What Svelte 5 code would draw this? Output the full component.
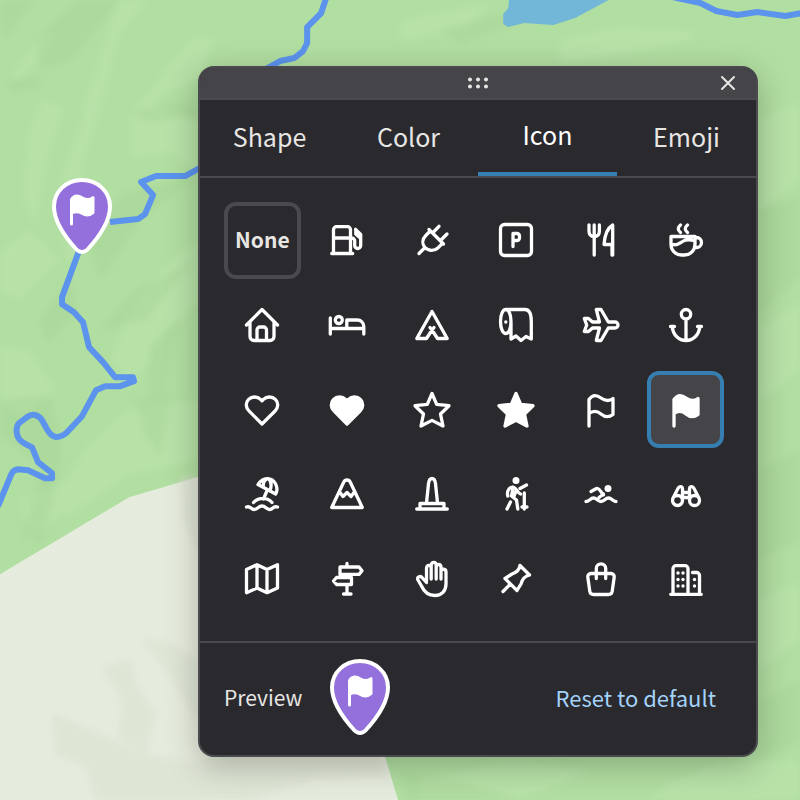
<script lang="ts">
  type Icon = { name: string; d: string; fill?: string; dots?: number[][] };

  const FLAG =
    "M8 36V9.5c4-5.5 8-4.500 12-1.500s8 3.500 12 .5v16c-4 3-8.500 2.500-12-.5s-8-3.500-12-.5";
  const HEART =
    "M20 34L7.2 21.2c-3.800-3.700-3.800-8.600-.6-11.800s8.700-3.200 12 0l1.400 1.400 1.400-1.400c3.300-3.200 8.800-3.200 12 0s3.200 8.100-.6 11.800z";
  const STAR =
    "M20 3.5L24.7 14.3 37 15.7 28.5 24 31 36 20 30.4 9 36 11.5 24 3 15.7 15.3 14.3z";

  const icons: Icon[] = [
    {
      name: "Gas station",
      d: "M6.5 33.500V9.700a3 3 0 0 1 3-3h11a3 3 0 0 1 3 3v23.800M4.700 33.500h21M6.500 18h17M23.500 18h1.200a3 3 0 0 1 3 3v4.500a3 3 0 0 0 6 0V14.500L28.500 9.300M28.800 10v4l4.500 4",
    },
    {
      name: "Charging",
      d: "M7 33.500l5.500-5.500M17 9.500l14.500 14.500M18.300 11l-4.300 4.200c-4 4-4 9-1 12.500 3.500 3.500 9.500 3.500 13.200 0l4.300-4.400M21.500 12l5.500-5.700M29.500 19.500l5.500-5.500",
    },
    {
      name: "Parking",
      d: "M8.500 4.500h23a4 4 0 0 1 4 4v23a4 4 0 0 1-4 4h-23a4 4 0 0 1-4-4v-23a4 4 0 0 1 4-4zM17 26.500V13.500h4a2.500 2.500 0 0 1 2.500 2.500v2a2.500 2.500 0 0 1-2.500 2.500h-4",
    },
    {
      name: "Restaurant",
      d: "M8 5v6c0 3.500 2 5.500 5.200 5.500s5.200-2 5.200-5.500V5M13.200 5v30M31.700 35V5c-5 3-8 9-8.700 19.500h8.700M31 26v9",
    },
    {
      name: "Cafe",
      d: "M5 16.500h24v7.500c0 6.500-4.500 11-10.500 11h-3c-6 0-10.500-4.500-10.500-11zM29 17.500h1.500a5 5 0 0 1 0 10H28.500M14.500 5c-3 2.500-3 5 0 7.500M21.500 5c-3 2.500-3 5 0 7.500M5 24c6 2 8.500-.5 11.500-2.500s7-2.500 12.500-.5",
    },
    {
      name: "House",
      d: "M4.500 20L20 4.500 35.500 20M8 17.500v14a4 4 0 0 0 4 4h16a4 4 0 0 0 4-4v-14M15 35V25a3 3 0 0 1 3-3h3.500a3 3 0 0 1 3 3v10",
    },
    {
      name: "Lodging",
      d: "M3.300 13v16M3.300 23.500h33.500M36.800 29v-7.500a6.500 6.500 0 0 0-6.500-6.500H19.800v8.500M15.300 15a3.500 3.500 0 1 1-7 0 3.500 3.500 0 0 1 7 0z",
    },
    {
      name: "Campground",
      d: "M20 6.500L4.800 33.500h9.700L20 25l5.500 8.500h9.700zM18 22.500l2 2.500 2-2.500",
    },
    {
      name: "Restroom",
      d: "M15 16.500c0 6.800-2.200 12-5.200 12s-5.300-5.200-5.300-12 2.300-12 5.300-12 5.200 5.200 5.200 12zM9.500 4.500h19.500c4.500 0 6.300 5 6.300 12V34L30 31.500 25 35.500 20 31 15 34V17",
      dots: [[9.800, 17]],
    },
    {
      name: "Airport",
      d: "M34 17h-6.700L20 4.500h-4.700L18.500 17h-7L7.500 13.500H3.300L5.700 20 3.300 26.500h4.200l4-3.500h7l-3.200 12.500H20L27.300 23H34a3 3 0 0 0 0-6z",
    },
    {
      name: "Harbor",
      d: "M24.700 9.200a4.700 4.700 0 1 1-9.400 0 4.700 4.700 0 0 1 9.400 0zM20 14v21M4.500 21.500h4M31.500 21.500h4M6.300 22c.7 8 6.700 13.500 13.700 13.500S33 30 33.700 22",
    },
    { name: "Heart", d: HEART },
    { name: "Heart, filled", d: HEART, fill: "currentColor" },
    { name: "Star", d: STAR },
    { name: "Star, filled", d: STAR, fill: "currentColor" },
    { name: "Flag", d: FLAG },
    { name: "Flag, filled", d: FLAG, fill: "currentColor" },
    {
      name: "Beach",
      d: "M16 10.500c5-8 14-7.500 17.500-.8 2 3.800 1.800 7.300.2 10.300zM25 4.700c-3 1.500-4 5-3.700 8.500M26.500 4.700c3 3 3 7.500 1.700 11.300M25.500 15.500l-4 9.500M11.500 28.500c5-5.500 14-5.500 18.500 0M4.500 33c4.500-1.500 4 2.500 7.700 2.500s4-3.500 7.800-3.500 4 3.500 7.700 3.500 3-4 7.800-2.500",
    },
    {
      name: "Mountain",
      d: "M16.800 8c1.200-2.700 5.200-2.700 6.400 0L35.300 33.500H4.700zM12.700 18l3.300 4.500 4-4 4 4 3.300-4.500",
    },
    {
      name: "Monument",
      d: "M4.700 35h30.600M8 34.500v-5h24v5M14.500 29l2-19.500c.5-3 2-5 3.500-5s3 2 3.500 5l2 19.500",
    },
    {
      name: "Hiking",
      d: "M16.500 13c-5 1-5.500 6-4.700 9M17 13.500c3-.5 4.500 5.500 7.500 6.500M24 14.500l6.500-3.500M17 14l-1.500 8 5 4 1.300 9M20.500 16l-2.500 6M14.500 28l-3.500 7M28.300 19v16M26 33h5",
      dots: [[20, 6.500, 3.500]],
    },
    {
      name: "Swimming",
      d: "M10 17.500l5.500-3c1.500-.8 3.500 1.500 7 6.500M22.500 20l-4.500 3.500M5 27.500c4 0 4-3.500 7.500-3.500s4 3.500 7.500 3.500 4-3.500 7.500-3.500 4 3.500 7.500 3.500",
      dots: [[27, 14.500, 3.500]],
    },
    {
      name: "Binoculars",
      d: "M16.500 26.500a5 5 0 1 1-10 0 5 5 0 0 1 10 0zM33.500 26.500a5 5 0 1 1-10 0 5 5 0 0 1 10 0zM6.800 24.500L12 14.500c1-2.500 4-2.500 4.500 0v12M33.200 24.500L28 14.500c-1-2.500-4-2.500-4.500 0v12M16.500 18.500h7M16.500 23.500h7",
    },
    {
      name: "Map",
      d: "M4.500 10.500L15 5.700 25 10.500 35.500 5.700V29L25 33.700 15 29 4.500 33.700zM15 5.700V29M25 10.500v23",
    },
    {
      name: "Signpost",
      d: "M20 4.500V7M20 16v2.500M20 26v8.500M16.500 35h7.500M13 8h19l3 3.700-3 3.700H13zM24.500 18.500H9.500L6.500 22 9.500 25.500h15z",
    },
    {
      name: "Hand",
      d: "M14.500 22V9.500c0-4.200 4.700-4 4.700 0V20M19.200 9V6.500c0-4.200 5-4.200 5 0V20M24.200 8.500c0-4 4.800-4 4.800 0V20M29 12c.5-2.500 5-2.500 5 1v12c0 7-4.500 11.500-11 11.500-8 0-11.500-5-13.500-9.500l-3.500-6c-1.500-3 2-4.500 4-2.500l4.500 5",
    },
    {
      name: "Pin",
      d: "M7 32.500l7-7M24 6.500l9.500 9.500M24 6.500c-.5 4.500-4 7-8 8.500L9 19.500 21 31.500l4-6.500c1-4 3.500-8 8.500-9",
    },
    {
      name: "Shopping",
      d: "M10 14.500h20a3.200 3.200 0 0 1 3.200 3.700l-2 14a4 4 0 0 1-4 3.300H12.800a4 4 0 0 1-4-3.300l-2-14a3.200 3.200 0 0 1 3.200-3.700zM15.300 19.500V9.500a4.700 4.700 0 0 1 9.400 0v10",
    },
    {
      name: "Buildings",
      d: "M4.700 35.300h30.600M7 35V9.700a3 3 0 0 1 3-3h9a3 3 0 0 1 3 3V35M26.500 13.500h4a3 3 0 0 1 3 3V35",
      dots: [
        [12, 14],
        [17, 14],
        [12, 20.500],
        [17, 20.500],
        [12, 27],
        [17, 27],
        [28.500, 20.500],
        [28.500, 27],
      ],
    },
  ];

  const tabs = ["Shape", "Color", "Icon", "Emoji"];

  let activeTab = $state("Icon");
  let selected = $state("Flag, filled");
</script>

{#snippet marker()}
  <svg class="marker" viewBox="0 0 60 76" aria-hidden="true">
    <path
      class="marker-body"
      d="M30 2C14.5 2 2 13.500 2 28.500 2 43 13.500 59.500 24.500 71.500c3 3.300 8 3.300 11 0C46.500 59.500 58 43 58 28.500 58 13.500 45.500 2 30 2z"
    />
    <path
      class="marker-flag"
      d="M19.500 46V21.500c3-4.500 7-4 11-1.500 3.500 2 7 2.300 10.500-.3V34.500c-3.500 3-7.500 3-11 .8s-7-2.300-10.500 0"
    />
  </svg>
{/snippet}

<main>
  <svg class="map" viewBox="0 0 800 800" preserveAspectRatio="xMinYMin slice" aria-hidden="true">
    <defs>
      <filter id="soften"><feGaussianBlur stdDeviation="3" /></filter>
    </defs>
    <g class="light" filter="url(#soften)">
      <path d="M10 78L40 34 58 36 42 58 18 82zM100 60L118 0h30l-30 38-14 60-18 40-4-30zM165 70l30-35 20 5-18 40-60 28z" />
      <path d="M28 130l14-30 22 6-18 60-10 60-14-30zM60 180l30-80 12 4-20 60 4 80-20 20zM130 110l32-30-6 28 44 14v50l-30-20-40 6zM0 250l30-20 30 30-40 40-20-8z" />
      <path d="M130 310l35-45 35-25v60l-40 40-28 50-22-30zM0 345l30 5 26 40-30 26-26-12zM84 450l40-40 76-10v60l-70 15-60 40-20-10zM20 500l50-20 20 10-60 50z" />
      <path d="M400 20l90-18-20 24-70 16zM560 40l60-14 80 6-20 12-120 20zM760 120l40-20v80l-40 30zM760 330l40-30v70l-40 30zM758 600l42-20v60l-42 30zM420 780l90-20 80 10-70 30H420zM640 800l80-40 80 0v40z" />
    </g>
    <g class="dark" filter="url(#soften)">
      <path d="M0 0h34L4 40zM35 40l44-40h40L96 30 70 60 40 70zM8 82l28-6 6 10-30 6zM128 112l60-10 12 12-50 8zM90 245l30-50 80-20-60 45-40 60zM40 320l30-40 8 30-30 34zM135 290l60-30-50 60-45 10z" />
      <path d="M150 345l30-30-8 40-12 60-10-10zM135 400l36-10-10 66-16-20zM0 400l50-5 12 60-20 90-20-10 20-70-42-30zM440 30l80-20 10 8-70 26zM758 210l42-14v80l-42 40zM758 470l42-20v90l-42 20zM760 700l40-20v60l-40 20zM400 770l60 10 60 20H405z" />
    </g>
    <path class="sand" d="M0 574L129 497 200 476 350 540 385 757 398 800H0z" />
    <g class="sand-dark" filter="url(#soften)">
      <path d="M142 638l28 4 28 18v60l-16-22-18-30zM102 668l28-10 6 26 20 30-10 40-28-16 4-36zM52 712l18 8 66 30 62 14 30 30-30 6H95l-8-32-32-14zM180 476h20v80l-18-40z" />
      <path d="M200 757h180l8 20-70 2-70 21h-40z" />
    </g>
    <path class="water" d="M509-2L508 8 503 14V24L508 27 524 23 553 25 575 18 612-2z" />
    <path class="road" d="M326-2L321 13 307 27V43L303 51 294 58 280 61 262 71" />
    <path class="road" d="M205 165L185 176H156L141 182 153 195 145 214 138 219 110 222" />
    <path
      class="road"
      d="M80 248L62 297V304L74 312 83 322 89 347 103 362 115 377H133L134 381 120 386H105L96 390 82 416 66 433C58 439 52 438 47 429L42 420C38 414 32 413 27 417L19 423C16 426 16 433 18 437 20 442 27 445 32 447L38 462 52 473V478H45L28 470 18 469C11 470 11 476 8 482L-2 506"
    />
    <path class="road" d="M672-3L700 3 716 11 737 15 757 12 785 16 802 13" />
  </svg>

  <div class="map-pin">{@render marker()}</div>

  <section class="panel" aria-label="Marker style">
    <header>
      <svg class="grip" viewBox="0 0 22 12" aria-hidden="true">
        {#each [3, 11, 19] as x}
          <circle cx={x} cy="2.5" r="2" />
          <circle cx={x} cy="9.5" r="2" />
        {/each}
      </svg>
      <button class="close" aria-label="Close">
        <svg viewBox="0 0 16 16" aria-hidden="true"><path d="M2 2l12 12M14 2L2 14" /></svg>
      </button>
    </header>

    <div class="tabs" role="tablist">
      {#each tabs as tab}
        <button
          role="tab"
          class:active={activeTab === tab}
          aria-selected={activeTab === tab}
          onclick={() => (activeTab = tab)}>{tab}</button
        >
      {/each}
    </div>

    <div class="icons">
      <button class="none" onclick={() => (selected = "")}>None</button>
      {#each icons as icon}
        <button
          class:selected={selected === icon.name}
          aria-label={icon.name}
          aria-pressed={selected === icon.name}
          onclick={() => (selected = icon.name)}
        >
          <svg viewBox="0 0 40 40" fill={icon.fill ?? "none"} aria-hidden="true">
            <path d={icon.d} />
            {#each icon.dots ?? [] as [cx, cy, r]}
              <circle {cx} {cy} r={r ?? 1.7} />
            {/each}
          </svg>
        </button>
      {/each}
    </div>

    <footer>
      <span>Preview</span>
      {@render marker()}
      <button class="reset" onclick={() => (selected = "Flag, filled")}>Reset to default</button>
    </footer>
  </section>
</main>

<style>
  main {
    position: relative;
    min-height: 100vh;
    box-sizing: border-box;
    padding: 66px 42px 43px 198px;
    background: #b1dea1;
    overflow: hidden;
    font-family: "Noto Sans CJK SC", "Open Sans", sans-serif;
    color: #e8e6e3;
  }
  .map {
    position: absolute;
    inset: 0;
    width: 100%;
    height: 100%;
  }
  .light {
    fill: #bde5ae;
    opacity: 0.5;
  }
  .dark {
    fill: #a4d193;
    opacity: 0.35;
  }
  .sand {
    fill: #e6ecdd;
  }
  .sand-dark {
    fill: #d8dfcd;
    opacity: 0.5;
  }
  .water {
    fill: #72b7d8;
  }
  .road {
    fill: none;
    stroke: #5c93ec;
    stroke-width: 6;
    stroke-linejoin: round;
  }
  .map-pin {
    position: absolute;
    left: 52px;
    top: 178px;
  }
  .marker {
    display: block;
    width: 60px;
    height: 76px;
  }
  .marker-body {
    fill: #9370db;
    stroke: #fff;
    stroke-width: 4;
  }
  .marker-flag {
    fill: #fff;
    stroke: #fff;
    stroke-width: 3;
    stroke-linejoin: round;
    stroke-linecap: round;
  }
  .panel {
    position: relative;
    background: #2a292e;
    border: 2px solid #4a4a4e;
    border-radius: 16px;
    overflow: hidden;
    box-shadow: 0 8px 32px rgba(0, 0, 0, 0.25);
  }
  button {
    margin: 0;
    padding: 0;
    border: 0;
    background: none;
    color: inherit;
    font: inherit;
    cursor: pointer;
  }
  header {
    display: grid;
    grid-template-columns: 1fr auto 1fr;
    align-items: center;
    height: 30px;
    padding: 0 20px;
    background: #454449;
    border-bottom: 2px solid #4a4a4e;
  }
  .grip {
    grid-column: 2;
    width: 22px;
    height: 12px;
    fill: #e8e6e3;
  }
  .close {
    justify-self: end;
    display: flex;
  }
  .close svg {
    width: 16px;
    height: 16px;
    stroke: #e8e6e3;
    stroke-width: 2;
    stroke-linecap: round;
  }
  .tabs {
    display: flex;
    height: 76px;
    border-bottom: 2px solid #4a4a4e;
  }
  .tabs button {
    flex: 1;
    padding-bottom: 4px;
    font-size: 25px;
    line-height: 36px;
  }
  .tabs .active {
    border-bottom: 4px solid #377eb5;
    color: #fff;
  }
  .icons {
    display: grid;
    grid-template-columns: repeat(6, 1fr);
    gap: 8px;
    padding: 24px 32px 24px 24px;
    border-bottom: 2px solid #4a4a4e;
  }
  .icons button {
    display: flex;
    align-items: center;
    justify-content: center;
    aspect-ratio: 1;
    box-sizing: border-box;
    border: 4px solid transparent;
    border-radius: 12px;
    color: #fff;
  }
  .icons .none {
    padding-bottom: 2px;
    border-color: #4a4a4e;
    color: #e8e6e3;
    font-size: 21px;
    font-weight: 700;
  }
  .icons .selected {
    border-color: #377eb0;
    background: #454449;
  }
  .icons svg {
    width: 40px;
    height: 40px;
    stroke: currentColor;
    stroke-width: 3.3;
    stroke-linecap: round;
    stroke-linejoin: round;
  }
  .icons circle {
    fill: currentColor;
    stroke: none;
  }
  footer {
    display: flex;
    align-items: center;
    gap: 28px;
    height: 108px;
    padding: 0 40px 4px 24px;
    font-size: 21px;
    line-height: 32px;
  }
  .reset {
    margin-left: auto;
    color: #a3d3fa;
    font-size: 22px;
  }
</style>
